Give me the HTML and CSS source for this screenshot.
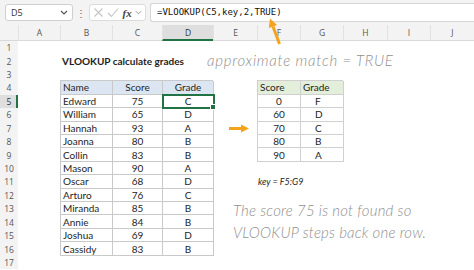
FILE: index.html
```html
<!DOCTYPE html>
<html>
  <head>
    <link rel="stylesheet" href="styles.css">
  </head>
  <body>
    <div class="app">
      <div class="formula-bar">
        <div class="name-box">
          <span>D5</span>
          <svg class="chev" width="8" height="5" viewBox="0 0 8 5"><polyline points="1,1 4,4 7,1" fill="none" stroke="#555" stroke-width="1.2"/></svg>
        </div>
        <span class="grip">⋮</span>
        <div class="fx-tools">
          <svg width="11" height="11" viewBox="0 0 11 11"><path d="M1.5 1.5 L9.5 9.5 M9.5 1.5 L1.5 9.5" stroke="#c4c4c4" stroke-width="1.1"/></svg>
          <svg width="12" height="11" viewBox="0 0 12 11"><polyline points="1,6 4.5,9.5 11,1.5" fill="none" stroke="#c4c4c4" stroke-width="1.1"/></svg>
          <span class="fx">fx</span>
          <svg width="7" height="5" viewBox="0 0 8 5"><polyline points="1,1 4,4 7,1" fill="none" stroke="#888" stroke-width="1"/></svg>
        </div>
        <div class="formula">=VLOOKUP(C5,key,2,TRUE)</div>
      </div>

      <div class="sheet">
        <div class="corner"></div>
        <div class="col-head">A</div>
        <div class="col-head">B</div>
        <div class="col-head">C</div>
        <div class="col-head active">D</div>
        <div class="col-head">E</div>
        <div class="col-head">F</div>
        <div class="col-head">G</div>
        <div class="col-head">H</div>
        <div class="col-head">I</div>
        <div class="col-head">J</div>

        <div class="row-head">1</div>
        <div class="row-head">2</div>
        <div class="row-head">3</div>
        <div class="row-head">4</div>
        <div class="row-head active">5</div>
        <div class="row-head">6</div>
        <div class="row-head">7</div>
        <div class="row-head">8</div>
        <div class="row-head">9</div>
        <div class="row-head">10</div>
        <div class="row-head">11</div>
        <div class="row-head">12</div>
        <div class="row-head">13</div>
        <div class="row-head">14</div>
        <div class="row-head">15</div>
        <div class="row-head">16</div>
        <div class="row-head">17</div>

        <div class="title">VLOOKUP calculate grades</div>
        <div class="note note-match">approximate match = TRUE</div>

        <div class="grades">
          <div class="th left">Name</div><div class="th">Score</div><div class="th">Grade</div>
          <div class="td left">Edward</div><div class="td">75</div><div class="td selected">C</div>
          <div class="td left">William</div><div class="td">65</div><div class="td">D</div>
          <div class="td left">Hannah</div><div class="td">93</div><div class="td">A</div>
          <div class="td left">Joanna</div><div class="td">80</div><div class="td">B</div>
          <div class="td left">Collin</div><div class="td">83</div><div class="td">B</div>
          <div class="td left">Mason</div><div class="td">90</div><div class="td">A</div>
          <div class="td left">Oscar</div><div class="td">68</div><div class="td">D</div>
          <div class="td left">Arturo</div><div class="td">76</div><div class="td">C</div>
          <div class="td left">Miranda</div><div class="td">85</div><div class="td">B</div>
          <div class="td left">Annie</div><div class="td">84</div><div class="td">B</div>
          <div class="td left">Joshua</div><div class="td">69</div><div class="td">D</div>
          <div class="td left">Cassidy</div><div class="td">83</div><div class="td">B</div>
        </div>

        <div class="point-arrow">
          <svg width="44" height="13" viewBox="0 0 44 13"><line x1="16" y1="6.5" x2="29" y2="6.5" stroke="#f3a41c" stroke-width="3"/><polygon points="28,2.5 36,6.5 28,10.5" fill="#f3a41c"/></svg>
        </div>

        <div class="key-table">
          <div class="th">Score</div><div class="th">Grade</div>
          <div class="td">0</div><div class="td grade">F</div>
          <div class="td">60</div><div class="td grade">D</div>
          <div class="td">70</div><div class="td grade">C</div>
          <div class="td">80</div><div class="td grade">B</div>
          <div class="td">90</div><div class="td grade">A</div>
        </div>

        <div class="key-name">key = F5:G9</div>
        <div class="note note-explain">The score 75 is not found so<br>VLOOKUP steps back one row.</div>
      </div>

      <svg class="overlay" width="474" height="270" viewBox="0 0 474 270">
        <line x1="279.5" y1="44" x2="273" y2="26.5" stroke="#f3a41c" stroke-width="3"/>
        <polygon points="270,18.5 277,25 268.8,28" fill="#f3a41c"/>
      </svg>
    </div>
  </body>
</html>
```

FILE: styles.css
```css
:root {
  --chrome: #f3f3f3;
  --chrome-line: #d9d9d9;
  --cell-line: #c9c9c9;
  --excel-green: #217346;
  --arrow: #f3a41c;
  --note: #8f8f8f;
}
body {
  margin: 0;
  font-family: Lato, "Liberation Sans", sans-serif;
  background-color: #fff;
  color: #1e1e1e;
}
.app {
  position: relative;
  width: 474px;
  height: 270px;
  overflow: hidden;
}

/* formula bar */
.formula-bar {
  display: flex;
  align-items: center;
  height: 25px;
  padding-left: 5px;
  background-color: var(--chrome);
  box-sizing: border-box;
}
.name-box {
  display: flex;
  align-items: center;
  justify-content: space-between;
  width: 68px;
  height: 17px;
  padding: 0 4px 0 5px;
  box-sizing: border-box;
  background-color: #fff;
  border: 1px solid #cfcfcf;
  border-radius: 3px;
  font-family: "Open Sans", sans-serif;
  font-size: 9px;
  color: #333;
}
.grip {
  width: 16px;
  text-align: center;
  color: #666;
  font-size: 10px;
}
.fx-tools {
  display: flex;
  align-items: center;
  justify-content: space-between;
  width: 57px;
  height: 17px;
  padding: 0 3px 0 3px;
  box-sizing: border-box;
  background-color: #fff;
  border: 1px solid #dcdcdc;
  border-radius: 3px;
}
.fx {
  font-family: "Liberation Serif", serif;
  font-style: italic;
  font-weight: bold;
  font-size: 11px;
  color: #444;
}
.formula {
  flex: 1;
  height: 17px;
  margin-left: 4px;
  padding-left: 6px;
  background-color: #fff;
  border: 1px solid #d6d6d6;
  border-right: none;
  border-radius: 3px 0 0 3px;
  font-family: "DejaVu Sans Mono", monospace;
  font-size: 9px;
  line-height: 17px;
  color: #111;
}

/* sheet grid */
.sheet {
  display: grid;
  grid-template-columns: 18px 42px 52px 50px 51px 44px 43px 43px 44px 43px 44px;
  grid-template-rows: 16px repeat(17, 13.43px);
  font-size: 10px;
}
.corner {
  grid-row: 1;
  grid-column: 1;
  background-color: var(--chrome);
  border-bottom: 1px solid var(--chrome-line);
}
.col-head {
  grid-row: 1;
  display: flex;
  align-items: center;
  justify-content: center;
  background-color: var(--chrome);
  border-left: 1px solid #e2e2e2;
  border-bottom: 1px solid var(--chrome-line);
  box-sizing: border-box;
  font-family: "Open Sans", sans-serif;
  font-size: 8.5px;
  color: #555;
}
.col-head.active {
  background-color: #dedede;
  border-bottom: 2px solid var(--excel-green);
  color: #333;
}
.row-head {
  grid-column: 1;
  display: flex;
  align-items: center;
  justify-content: center;
  background-color: var(--chrome);
  font-family: "Open Sans", sans-serif;
  font-size: 8.5px;
  color: #555;
}
.row-head.active {
  background-color: #dedede;
  box-shadow: inset -2px 0 0 var(--excel-green);
  color: #333;
}

.title {
  grid-row: 3;
  grid-column: 3 / 6;
  display: flex;
  align-items: center;
  padding-left: 2px;
  font-weight: bold;
  font-size: 10px;
  white-space: nowrap;
}
.note {
  color: var(--note);
  font-family: Lato, sans-serif;
  font-style: italic;
  font-weight: 300;
  white-space: nowrap;
}
.note-match {
  grid-row: 3;
  grid-column: 5 / 12;
  padding-left: 45px;
  font-size: 15px;
  line-height: 13.43px;
  letter-spacing: 0.75px;
}
.note-explain {
  grid-row: 13 / 17;
  grid-column: 6 / 12;
  padding: 10px 0 0 20px;
  font-size: 15px;
  line-height: 22px;
  letter-spacing: 0.2px;
}

/* tables */
.grades,
.key-table {
  display: grid;
  grid-auto-rows: 13.43px;
  border-top: 1px solid var(--cell-line);
  border-left: 1px solid var(--cell-line);
  box-sizing: border-box;
}
.grades {
  grid-row: 5 / 18;
  grid-column: 3 / 6;
  grid-template-columns: 52px 50px 51px;
  margin-top: -1px;
}
.key-table {
  grid-row: 5 / 11;
  grid-column: 7 / 9;
  grid-template-columns: 43px 43px;
  margin-top: -1px;
  border-color: #d0d0d0;
}
.th,
.td {
  position: relative;
  display: flex;
  align-items: center;
  justify-content: center;
  border-right: 1px solid var(--cell-line);
  border-bottom: 1px solid var(--cell-line);
  box-sizing: border-box;
  font-size: 10px;
  white-space: nowrap;
}
.left {
  justify-content: flex-start;
  padding-left: 2px;
}
.grades .th {
  background-color: #dce6f2;
}
.key-table .th {
  justify-content: flex-start;
  padding-left: 2px;
  background-color: #e3efda;
}
.key-table .th,
.key-table .td {
  border-color: #d0d0d0;
}
.key-table .grade {
  justify-content: flex-start;
  padding-left: 14px;
}
.selected {
  z-index: 1;
  outline: 2px solid var(--excel-green);
  outline-offset: -1px;
}
.selected::after {
  content: "";
  position: absolute;
  right: -3px;
  bottom: -3px;
  width: 4px;
  height: 4px;
  background-color: var(--excel-green);
  border: 1px solid #fff;
}

.point-arrow {
  grid-row: 8;
  grid-column: 6;
  display: flex;
  align-items: center;
}
.key-name {
  grid-row: 12;
  grid-column: 7 / 10;
  display: flex;
  align-items: center;
  padding-left: 1px;
  font-style: italic;
  font-size: 9px;
  white-space: nowrap;
}

.overlay {
  position: absolute;
  left: 0;
  top: 0;
  pointer-events: none;
}
```
